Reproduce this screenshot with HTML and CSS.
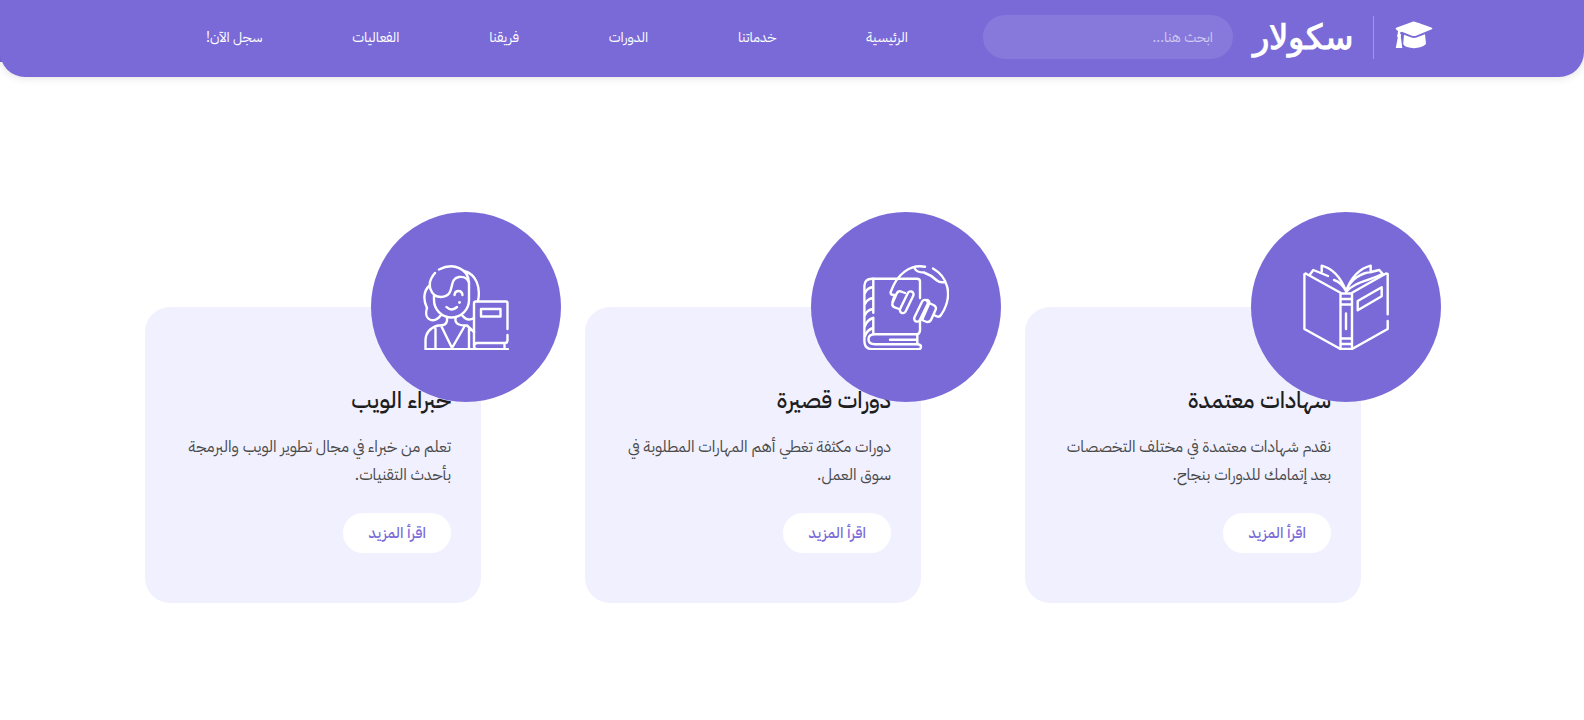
FILE: index.html
```html
<!DOCTYPE html>
<html lang="ar" dir="rtl">
<head>
<meta charset="utf-8">
<title>سكولار</title>
<link rel="stylesheet" href="styles.css">
</head>
<body>
<header class="site-header">
  <div class="container header-inner">
    <a class="logo" href="#">
      <svg class="logo-mark" viewBox="0 0 40 32" aria-hidden="true">
        <path fill="#fff" d="M20 2.500 Q21 2.500 37.800 8.800 Q39.200 9.500 37.800 10.300 L22 16.700 Q20 17.400 18 16.700 L8.500 13 Q7 12.600 6.400 13.200 Q5.600 14.200 6.600 15 Q7.600 16 6.800 17.400 L8.300 29 H1.800 L3.800 18.500 Q2.300 17 3.600 15.200 L4 12 L2.200 10.400 Q.8 9.500 2.200 8.700 L18.600 2.700 Z"/>
        <path fill="#fff" d="M10 15.700 L17.400 18.500 Q20 19.400 22.600 18.500 L31 15.300 L32 25 Q30 27 27 28 Q20 30.300 13 28 Q10.500 27.400 9.200 25 Z"/>
      </svg>
      <span class="logo-text">سكولار</span>
    </a>
    <form class="search" role="search">
      <input class="search-input" type="text" aria-label="بحث" placeholder="ابحث هنا...">
    </form>
    <nav class="nav">
      <a class="nav-link" href="#">الرئيسية</a>
      <a class="nav-link" href="#">خدماتنا</a>
      <a class="nav-link" href="#">الدورات</a>
      <a class="nav-link" href="#">فريقنا</a>
      <a class="nav-link" href="#">الفعاليات</a>
      <a class="nav-link" href="#">سجل الآن!</a>
    </nav>
  </div>
</header>
<main class="container services">
  <article class="card">
    <div class="card-icon">
      <svg class="icon" viewBox="0 0 86 86" aria-hidden="true">
        <path d="M2.700 9.500 L37.500 28.700 M84.700 50.300 V10 L83 9.500 L49 28.700 M84.700 57 V65 L49 85 H37.500 L1.400 65 V10 L2.700 9.500"/>
        <path d="M37.500 29.500 H49 V85 M37.500 29.500 V85 M37.500 35 H49 M37.500 40.500 H49 M37.500 74.500 H49 M37.500 80 H49 M43 49.500 V65"/>
        <path d="M54.700 37 L78.700 23.300 V32.300 L54.700 46.300 Z M7 10.500 L10.300 6 L25 12 M80.300 10.500 L76.300 6 L68 8"/>
        <path d="M43 27 C38 14 31 5 18.700 1.700 V7.700 M43 27 C48 14 55 5 67.700 1.700 V7.700 M43 27 C40 21 37 18 31 16 M43 27 C48 15 58 9 68 8 M43 28 C53 17 66 17 78 10.500"/>
      </svg>
    </div>
    <h2 class="card-title">شهادات معتمدة</h2>
    <p class="card-text">نقدم شهادات معتمدة في مختلف التخصصات بعد إتمامك للدورات بنجاح.</p>
    <a class="card-link" href="#">اقرأ المزيد</a>
  </article>
  <article class="card">
    <div class="card-icon">
      <svg class="icon" viewBox="0 0 86 86" aria-hidden="true">
        <path d="M55 85.300 H9 Q1.400 85 1.400 77 V22 Q1.400 14.700 9 14.700 H54 Q57 14.700 57 17.500 V34 M57 57 V66 Q57 70.300 53 70.300 H12 Q5.500 70.300 5.500 75.300 Q5.500 80.300 12 80.300 H55 Q58 80.800 58 82.800 Q58 85.300 55 85.300"/>
        <path d="M10.300 14.700 V48.700 M10.300 53.700 V70 M2 29 Q4 24 10 23 M2 40 Q4 35 10 34 M2 51 Q4 46 10 45 M2 62 Q4 56 10 54 M2 72 Q4 66 10 64 M27 75.700 H54 M54.300 71 V80"/>
        <path d="M31 31 Q27 31 27.700 28 C34 10 47 0 62 2.700 M70 4.500 C85 13 89 30 81 46 L78 51 Q76 54 72 51.500 M52 5 Q54 8.500 61 8.500 Q68 11 74 16.500 Q77 19 82 18"/>
        <rect x="40.700" y="26.500" width="6" height="23.500" rx="3" transform="rotate(26 43.700 38.300)"/>
        <path d="M42 29 L38 27.500 Q35 26.500 33.500 30 L29.500 39 Q28.500 42.500 32 43.500 L36 45 M32 31 Q28 39 30 42"/>
        <rect x="55" y="35" width="6" height="23.500" rx="3" transform="rotate(26 58 46.700)"/>
        <path d="M64 36 Q67 37 66 40 L59 56 M66 39 L70.500 41 Q74 43 72.500 46 L68 56 Q66 59 62.500 57.500 L59 56"/>
      </svg>
    </div>
    <h2 class="card-title">دورات قصيرة</h2>
    <p class="card-text">دورات مكثفة تغطي أهم المهارات المطلوبة في سوق العمل.</p>
    <a class="card-link" href="#">اقرأ المزيد</a>
  </article>
  <article class="card">
    <div class="card-icon">
      <svg class="icon" viewBox="0 0 86 86" aria-hidden="true">
        <path d="M84.500 65 V39 Q84.500 37.500 83 37.500 H53 Q51 37.500 51 39.500 V82 Q51 85.300 54 85.300 H85 M3 85.300 H54 M84.500 71 V76 Q84.500 79 82 79 H54 Q51 79 51 83 M81.500 79 V85 M58 45 H77.500 V52.500 H58 Z"/>
        <path d="M16 5.500 C31 -2 45 5 46 18 V36 A17.500 17.500 0 0 1 11 36 V31 M12 9 C2 20 8 33 18 33 C34 32 24 15 36 13 Q44 12 46 19 M41 7 C53 10 58 23 55 37 M7 21 C-1 28 1 38 4 44 C0 57 12 60 18 51 M39 51 Q44 58 51 54"/>
        <path d="M31.500 31 Q32 27 35.500 27 Q39 27 39.500 31 M23.500 43 Q28.500 48 34 43 M24 53 V57 Q23 62 15 61.500 Q3 65 2.500 76 V85 M32.500 53 V57 Q34 62 44 61.500 L51 68 M18 61.500 L29 84 L42 61.500 M12.500 65 V85 M46 65 V85"/>
        <circle class="icon-dot" cx="36.500" cy="38.500" r="1.400"/>
      </svg>
    </div>
    <h2 class="card-title">خبراء الويب</h2>
    <p class="card-text">تعلم من خبراء في مجال تطوير الويب والبرمجة بأحدث التقنيات.</p>
    <a class="card-link" href="#">اقرأ المزيد</a>
  </article>
</main>
</body>
</html>
```

FILE: styles.css
```css
* { box-sizing: border-box; }
body {
  margin: 0;
  background: #fff;
  font-family: "IBM Plex Sans Arabic", "Noto Sans Arabic", "Noto Sans", sans-serif;
}
.container { width: 100%; max-width: 1320px; margin: 0 auto; padding: 0 12px; }
.site-header {
  position: relative;
  padding-bottom: 3px;
  background: #7a6ad8;
  border-radius: 0 0 25px 25px;
  box-shadow: 0 0 10px rgba(0, 0, 0, 0.15);
}
.site-header::before {
  content: "";
  position: absolute;
  z-index: -1;
  top: 0;
  left: 0;
  width: 25px;
  height: 62px;
  background: #7a6ad8;
}
.header-inner { display: flex; align-items: center; min-height: 74px; }
.logo { display: flex; align-items: center; color: #fff; text-decoration: none; }
.logo-mark { width: 40px; height: 32px; margin: 0 6px 4px 20px; }
.logo-text {
  padding-right: 20px;
  border-right: 1px solid rgba(255, 255, 255, 0.3);
  font-family: Poppins, "Open Sans", sans-serif;
  font-size: 34px;
  font-weight: 700;
  line-height: 43px;
}
.search { margin-right: 20px; }
.search-input {
  width: 250px;
  height: 44px;
  padding: 0 20px;
  border: 0;
  border-radius: 22px;
  background: rgba(255, 255, 255, 0.1);
  color: #fff;
  font-family: inherit;
  font-size: 14px;
}
.search-input::placeholder { color: rgba(255, 255, 255, 0.6); }
.nav { display: flex; flex: 1; justify-content: space-between; padding: 0 75px 0 62px; }
.nav-link { color: #fff; font-size: 14px; text-decoration: none; }
.services {
  display: grid;
  grid-template-columns: repeat(3, 1fr);
  gap: 104px;
  padding: 230px 91px 0 13px;
}
.card { position: relative; padding: 75px 30px 50px; border-radius: 25px; background: #f1f0fe; }
.card-icon {
  position: absolute;
  top: -95px;
  right: -80px;
  display: flex;
  align-items: center;
  justify-content: center;
  width: 190px;
  height: 190px;
  border-radius: 50%;
  background: #7a6ad8;
}
.icon { width: 86px; height: 86px; fill: none; stroke: #fff; stroke-width: 2.400; stroke-linecap: round; stroke-linejoin: round; }
.icon-dot { fill: #fff; stroke: none; }
.card-title { margin: 0 0 13px; color: #1e1e1e; font-size: 23px; font-weight: 500; line-height: 38px; }
.card-text { margin: 0 0 24px; color: #4a4a4a; font-size: 16px; line-height: 28px; }
.card-link {
  display: inline-block;
  padding: 0 25px;
  border-radius: 20px;
  background: #fff;
  color: #7a6ad8;
  font-size: 15px;
  font-weight: 500;
  line-height: 40px;
  text-decoration: none;
}
```
